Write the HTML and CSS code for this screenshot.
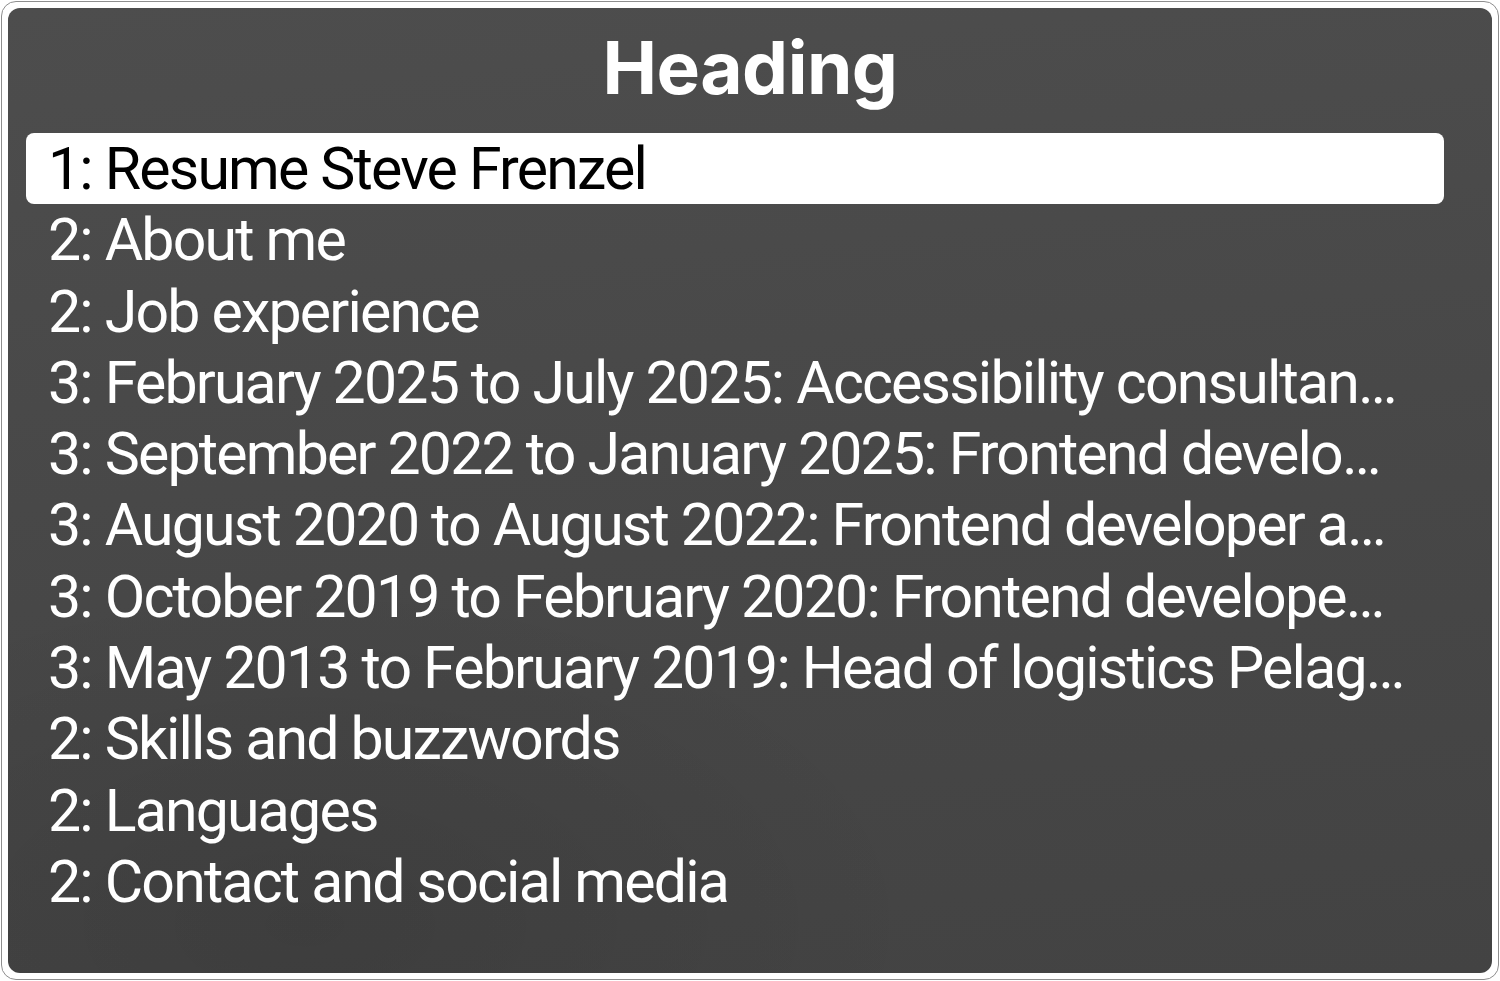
FILE: index.html
```html
<!DOCTYPE html>
<html lang="en">
<head>
<meta charset="utf-8">
<title>Heading rotor</title>
<link rel="stylesheet" href="styles.css">
</head>
<body>
<div class="frame">
  <div class="panel">
    <h1 class="title">Heading</h1>
    <ul class="list">
      <li class="item selected"><span class="label">1: Resume Steve Frenzel</span></li>
      <li class="item"><span class="label">2: About me</span></li>
      <li class="item"><span class="label">2: Job experience</span></li>
      <li class="item"><span class="label">3: February 2025 to July 2025: Accessibility consultan…</span></li>
      <li class="item"><span class="label">3: September 2022 to January 2025: Frontend develo…</span></li>
      <li class="item"><span class="label">3: August 2020 to August 2022: Frontend developer a…</span></li>
      <li class="item"><span class="label">3: October 2019 to February 2020: Frontend develope…</span></li>
      <li class="item"><span class="label">3: May 2013 to February 2019: Head of logistics Pelag…</span></li>
      <li class="item"><span class="label">2: Skills and buzzwords</span></li>
      <li class="item"><span class="label">2: Languages</span></li>
      <li class="item"><span class="label">2: Contact and social media</span></li>
    </ul>
  </div>
</div>
</body>
</html>
```
FILE: styles.css
```css
* { box-sizing: border-box; }
html, body {
  margin: 0;
  padding: 0;
  background: #ffffff;
}
body {
  width: 1500px;
  height: 981px;
  overflow: hidden;
  font-family: Roboto, "Noto Sans", "Liberation Sans", sans-serif;
}
.frame {
  margin: 1px;
  width: 1498px;
  height: 979px;
  border: 1px solid #8e8e8e;
  border-radius: 15px;
  background: #ffffff;
  padding: 6px;
}
.panel {
  width: 100%;
  height: 100%;
  border-radius: 12px;
  background:
    radial-gradient(ellipse 900px 500px at 20% 95%, rgba(0,0,0,0.10), rgba(0,0,0,0) 70%),
    linear-gradient(175deg, #4d4d4d 0%, #474747 55%, #434343 100%);
  color: #ffffff;
  overflow: hidden;
}
.title {
  margin: 0;
  font-family: Inter, "Liberation Sans", sans-serif;
  font-size: 73px;
  font-weight: 700;
  line-height: 119px;
  text-align: center;
  letter-spacing: -0.5px;
}
.list {
  list-style: none;
  margin: 6px 48px 0 18px;
  padding: 0;
}
.item {
  height: 71.3px;
  line-height: 71.3px;
  font-size: 59px;
  letter-spacing: -1.8px;
  padding: 0 10px 0 22px;
  white-space: nowrap;
  border-radius: 8px;
  display: flex;
}
.label {
  white-space: nowrap;
}
.selected {
  background: #ffffff;
  color: #000000;
}
```
